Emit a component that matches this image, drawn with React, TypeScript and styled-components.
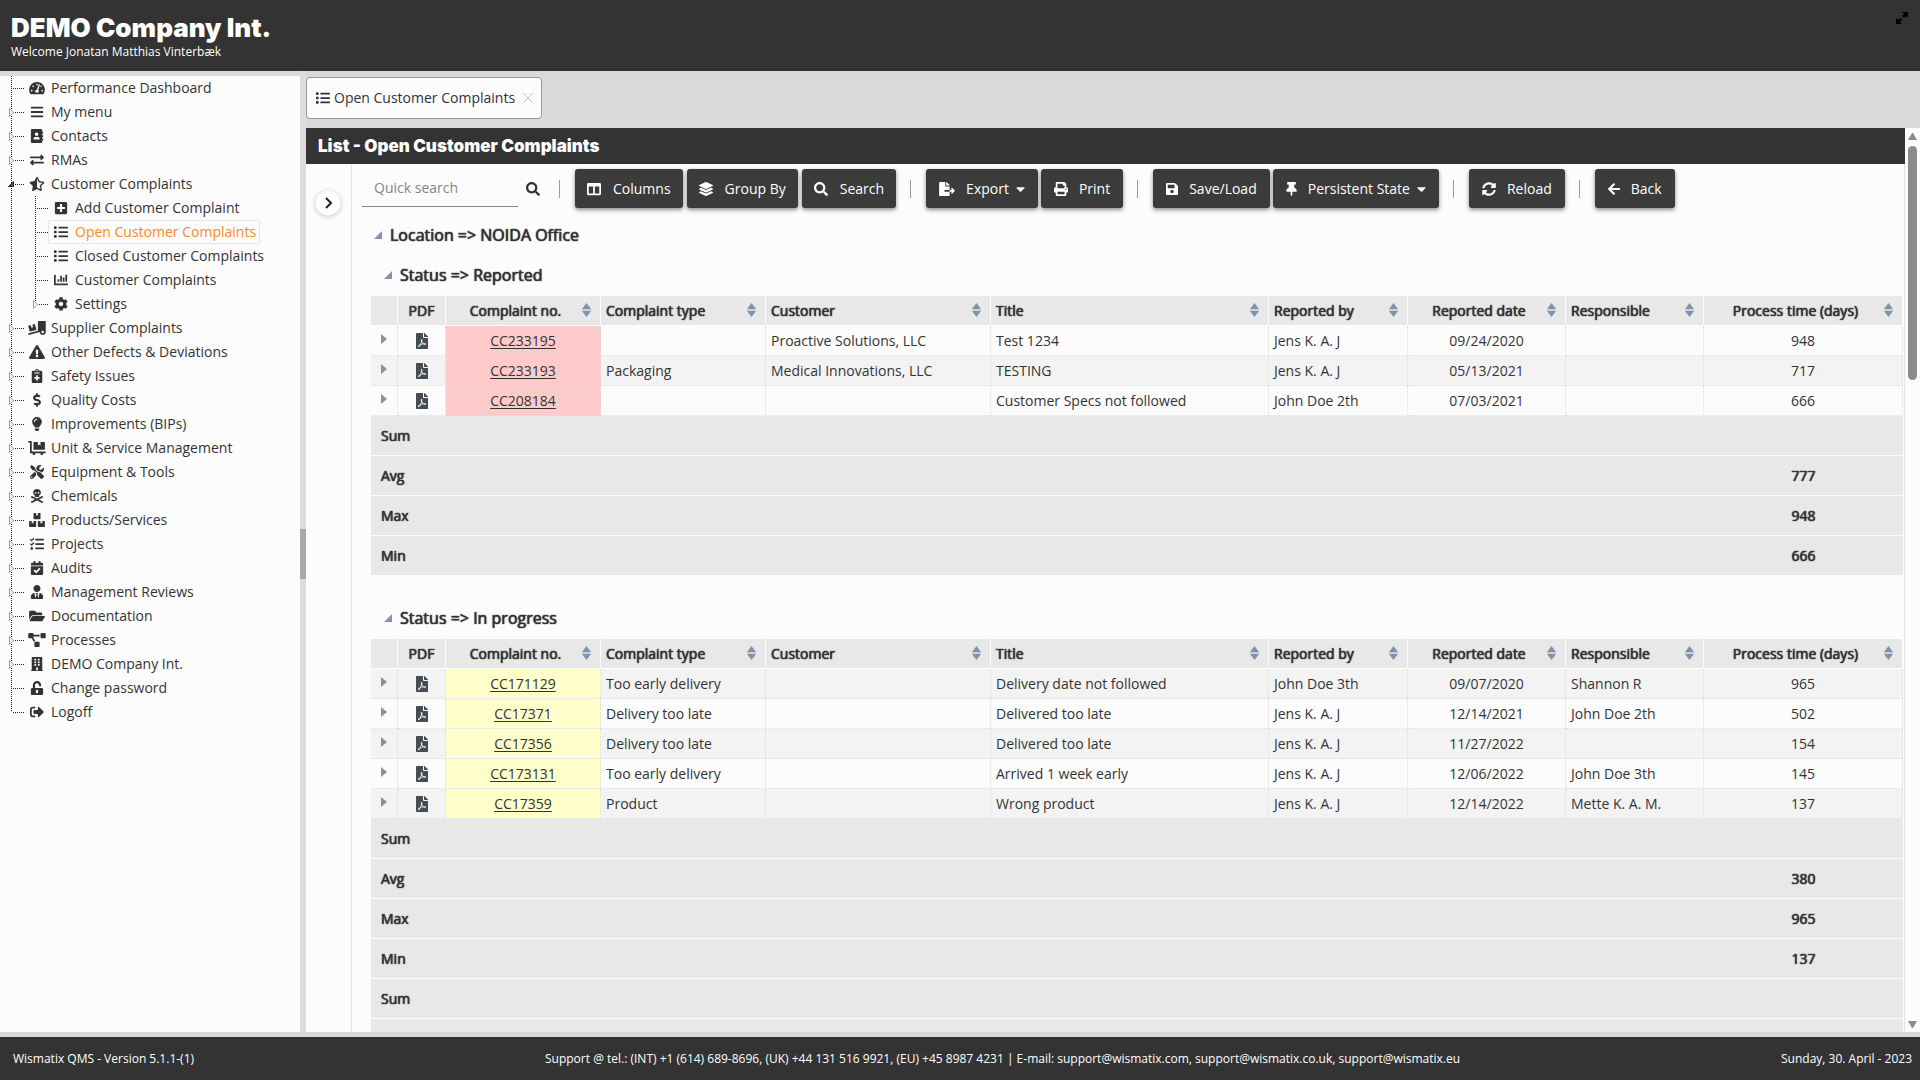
import React from "react";
import styled, { createGlobalStyle, css } from "styled-components";
import type { IconType } from "react-icons";
import {
  FaTachometerAlt, FaBars, FaAddressBook, FaExchangeAlt, FaStarHalfAlt, FaPlusSquare, FaList,
  FaChartBar, FaCog, FaTruckLoading, FaExclamationTriangle, FaNotesMedical, FaDollarSign,
  FaLightbulb, FaDollyFlatbed, FaTools, FaSkullCrossbones, FaBoxes, FaTasks, FaCalendarCheck,
  FaUserTie, FaFolderOpen, FaProjectDiagram, FaBuilding, FaUnlockAlt, FaSignOutAlt, FaColumns,
  FaLayerGroup, FaSearch, FaFileExport, FaPrint, FaSave, FaThumbtack, FaSyncAlt, FaArrowLeft,
  FaFilePdf, FaCaretDown,
} from "react-icons/fa";

const ink = "#333";
const paper = "#fcfcfc";
const sans = '"Open Sans", "Noto Sans", sans-serif';
const black = 'Inter, "Open Sans", sans-serif';

const GlobalStyle = createGlobalStyle`
  * { box-sizing: border-box; }
  body { margin: 0; background: #d9d9d9; color: ${ink}; font: 400 14px/20px ${sans}; overflow: hidden; }
  button, input { font: inherit; color: inherit; }
  button { border: 0; background: none; padding: 0; cursor: pointer; }
  a { color: inherit; text-decoration: none; }
  ul { list-style: none; margin: 0; padding: 0; }
  h1, h2, h3, p { margin: 0; }
`;

const emphasised = css`
  font-weight: 400;
  text-shadow: 0 0 1px currentColor, 0 0 1px currentColor;
`;

const Page = styled.div`
  display: flex;
  flex-direction: column;
  height: 100vh;
`;

const Header = styled.header`
  display: flex;
  justify-content: space-between;
  align-items: flex-start;
  flex: none;
  height: 71px;
  padding: 12px 12px 0 11px;
  background: ${ink};
  color: #fff;
`;

const Company = styled.h1`
  font: 900 26px/31px ${black};
`;

const Welcome = styled.p`
  font-size: 12px;
  line-height: 18px;
`;

const ExpandButton = styled.button`
  display: flex;
  width: 12px;
  height: 12px;
  color: #000;
`;

const Body = styled.div`
  display: flex;
  flex: 1;
  min-height: 0;
  padding-bottom: 5px;
`;

const Sidebar = styled.nav`
  flex: none;
  width: 300px;
  margin-top: 5px;
  background: ${paper};
`;

const Splitter = styled.div`
  display: flex;
  flex: none;
  align-items: center;
  width: 6px;
  padding-top: 5px;
  background: #ddd;
`;

const SplitterGrip = styled.div`
  width: 6px;
  height: 50px;
  background: #a9a9a9;
`;

const Row = styled.div`
  display: flex;
  align-items: center;
  height: 24px;
`;

const Toggle = styled.button`
  display: block;
  width: 24px;
  height: 24px;
`;

const Guide = styled.svg`
  display: block;
  flex: none;
  width: 24px;
  height: 24px;
`;

const TreeLink = styled.a<{ $active?: boolean }>`
  display: flex;
  align-items: center;
  height: 24px;
  padding-right: 3px;
  border: 1px solid ${(p) => (p.$active ? "#e6e6e6" : "transparent")};
  border-radius: 2px;
  & > span:last-child { color: ${(p) => (p.$active ? "#fd8a1c" : ink)}; }
`;

const IconSlot = styled.span`
  display: flex;
  margin-right: 2px;
  svg { width: 24px; height: 14px; }
`;

const Main = styled.main`
  display: flex;
  flex: 1;
  flex-direction: column;
  min-width: 0;
`;

const TabStrip = styled.div`
  display: flex;
  flex: none;
  height: 57px;
  padding-top: 6px;
`;

const Tab = styled.div`
  display: flex;
  align-items: center;
  gap: 4px;
  height: 42px;
  padding: 0 8px 0 9px;
  border: 1px solid #999;
  border-radius: 4px;
  background: ${paper};
`;

const CloseTab = styled.button`
  display: flex;
  margin-left: 4px;
  color: #c4c4c4;
`;

const Workspace = styled.div`
  display: flex;
  flex: 1;
  min-height: 0;
  background: ${paper};
`;

const Scrolled = styled.div`
  flex: 1;
  display: flex;
  flex-direction: column;
  min-width: 0;
  overflow: hidden;
`;

const TitleBar = styled.h2`
  flex: none;
  padding: 0 12px;
  background: ${ink};
  color: #fff;
  font: 900 17px/36px ${black};
`;

const Panels = styled.div`
  display: flex;
  flex: 1;
  min-height: 0;
  border-right: 1px solid #e4e4e4;
`;

const Drawer = styled.div`
  flex: none;
  width: 45px;
  padding: 26px 0 0 9px;
  background: ${paper};
`;

const DrawerButton = styled.button`
  display: flex;
  align-items: center;
  justify-content: center;
  width: 26px;
  height: 26px;
  border: 1px solid #eee;
  border-radius: 50%;
  background: #fff;
  box-shadow: 0 1px 4px rgba(60, 60, 90, 0.25);
`;

const Report = styled.div`
  flex: 1;
  min-width: 0;
  border-left: 1px solid #e4e4e4;
  padding: 5px 1px 0 10px;
  overflow: hidden;
`;

const Toolbar = styled.div`
  display: flex;
  align-items: center;
  height: 39px;
  margin-bottom: 8px;
`;

const Search = styled.form`
  display: flex;
  align-items: center;
`;

const SearchInput = styled.input`
  width: 156px;
  height: 37px;
  padding: 0 12px 1px;
  border: 0;
  border-bottom: 1px solid #888;
  background: transparent;
  outline: 0;
  &::placeholder { color: #858585; opacity: 1; }
`;

const SearchButton = styled.button`
  display: flex;
  margin: 0 5px 0 8px;
`;

const Separator = styled.span`
  width: 1px;
  height: 18px;
  margin: 0 15px 0 14px;
  background: #999;
`;

const Group = styled.div<{ $roomy: boolean }>`
  display: flex;
  gap: ${(p) => (p.$roomy ? 3 : 4)}px;
  button { padding: 0 ${(p) => (p.$roomy ? 13 : 12)}px; }
  button > span { margin-left: ${(p) => (p.$roomy ? 11 : 12)}px; }
`;

const ToolButton = styled.button<{ $icon: number }>`
  display: flex;
  align-items: center;
  height: 39px;
  border-radius: 3px;
  background: #3b3b3b;
  color: #fff;
  box-shadow: 0 2px 4px rgba(0, 0, 0, 0.45);
  & > svg { width: ${(p) => p.$icon}px; height: 14px; }
  & > span + svg { width: 9px; margin-left: 7px; }
`;

const GroupTitle = styled.h3<{ $level: number }>`
  display: flex;
  align-items: center;
  gap: 8px;
  height: 40px;
  padding: 0 0 2px ${(p) => (p.$level === 1 ? 12 : 22)}px;
  font-size: 16px;
  ${emphasised}
`;

const Table = styled.table`
  width: calc(100% - 9px);
  margin: 0 0 23px 9px;
  border-collapse: separate;
  border-spacing: 0;
  table-layout: fixed;
`;

const Col = styled.col<{ $w?: number }>`
  width: ${(p) => (p.$w ? `${p.$w}px` : "auto")};
`;

const HeadCell = styled.th<{ $center?: boolean; $plain?: boolean }>`
  height: 30px;
  padding: 0 ${(p) => (p.$plain ? 5 : 9)}px 0 5px;
  border-right: 1px solid ${paper};
  border-bottom: 1px solid ${paper};
  background: #e8e8e8;
  text-align: left;
  ${emphasised}
  & > div { display: flex; align-items: center; }
  & > div > span { flex: 1; text-align: ${(p) => (p.$center ? "center" : "left")}; }
`;

const SortButton = styled.button`
  display: flex;
  margin: 0 0 2px 2px;
`;

const Cell = styled.td<{ $center?: boolean; $tint?: string }>`
  height: 30px;
  padding: 0 5px;
  border-right: 1px dotted #ddd;
  border-bottom: 1px dotted #ddd;
  text-align: ${(p) => (p.$center ? "center" : "left")};
  ${(p) => p.$tint && css`background: ${p.$tint};`}
  white-space: nowrap;
  a { text-decoration: underline; text-underline-offset: 2px; }
`;

const DataRow = styled.tr<{ $odd: boolean }>`
  background: ${(p) => (p.$odd ? "#f3f3f3" : paper)};
`;

const RowToggle = styled.button`
  display: flex;
  margin: 0 auto 3px 5px;
`;

const PdfLink = styled.a`
  display: flex;
  justify-content: center;
  color: #444c54;
  svg { width: 16px; height: 16px; }
`;

const SumCell = styled.td<{ $center?: boolean }>`
  height: 40px;
  padding: 0 10px;
  background: #e8e8e8;
  border-bottom: 1px solid ${paper};
  text-align: ${(p) => (p.$center ? "center" : "left")};
  ${emphasised}
`;

const ScrollTrack = styled.div`
  display: flex;
  flex: none;
  flex-direction: column;
  align-items: center;
  width: 15px;
  padding: 5px 0 4px;
`;

const ScrollThumb = styled.div`
  width: 9px;
  height: 234px;
  margin: 6px 0 auto;
  border-radius: 5px;
  background: #8b8b8b;
`;

const Footer = styled.footer`
  display: flex;
  flex: none;
  align-items: center;
  justify-content: space-between;
  height: 43px;
  padding: 0 8px 0 13px;
  background: ${ink};
  color: #fff;
  font-size: 12px;
`;

const Support = styled.span`
  padding-left: 30px;
`;

type Node = { label: string; icon: IconType; kids?: boolean; children?: Node[]; active?: boolean };

const tree: Node[] = [
  { label: "Performance Dashboard", icon: FaTachometerAlt },
  { label: "My menu", icon: FaBars, kids: true },
  { label: "Contacts", icon: FaAddressBook, kids: true },
  { label: "RMAs", icon: FaExchangeAlt, kids: true },
  {
    label: "Customer Complaints", icon: FaStarHalfAlt, kids: true,
    children: [
      { label: "Add Customer Complaint", icon: FaPlusSquare },
      { label: "Open Customer Complaints", icon: FaList, active: true },
      { label: "Closed Customer Complaints", icon: FaList },
      { label: "Customer Complaints", icon: FaChartBar },
      { label: "Settings", icon: FaCog, kids: true },
    ],
  },
  { label: "Supplier Complaints", icon: FaTruckLoading, kids: true },
  { label: "Other Defects & Deviations", icon: FaExclamationTriangle, kids: true },
  { label: "Safety Issues", icon: FaNotesMedical, kids: true },
  { label: "Quality Costs", icon: FaDollarSign, kids: true },
  { label: "Improvements (BIPs)", icon: FaLightbulb, kids: true },
  { label: "Unit & Service Management", icon: FaDollyFlatbed, kids: true },
  { label: "Equipment & Tools", icon: FaTools, kids: true },
  { label: "Chemicals", icon: FaSkullCrossbones, kids: true },
  { label: "Products/Services", icon: FaBoxes, kids: true },
  { label: "Projects", icon: FaTasks, kids: true },
  { label: "Audits", icon: FaCalendarCheck, kids: true },
  { label: "Management Reviews", icon: FaUserTie, kids: true },
  { label: "Documentation", icon: FaFolderOpen, kids: true },
  { label: "Processes", icon: FaProjectDiagram, kids: true },
  { label: "DEMO Company Int.", icon: FaBuilding, kids: true },
  { label: "Change password", icon: FaUnlockAlt },
  { label: "Logoff", icon: FaSignOutAlt },
];

function Lines({ last, branch, toggle }: { last?: boolean; branch?: boolean; toggle?: "open" | "closed" }) {
  return (
    <Guide viewBox="0 0 24 24" aria-hidden="true">
      <path d={last ? "M11.5 0V12" : "M11.5 0V24"} stroke="#222" strokeDasharray="1 1" />
      {branch && <path d="M13 12.5H24" stroke="#222" strokeDasharray="1 1" />}
      {toggle === "closed" && <path d="M9.5 8.5V16.5L13.5 12.5Z" fill={paper} stroke="#a0a0a0" />}
      {toggle === "open" && <path d="M8.5 14.5H13.5V9.5Z" fill="#555" stroke="#222" />}
    </Guide>
  );
}

function TreeItem({ node, last, nested }: { node: Node; last: boolean; nested?: boolean }) {
  const Icon = node.icon;
  const state = node.children ? "open" : "closed";
  return (
    <li>
      <Row>
        {nested && <Lines />}
        {node.kids ? (
          <Toggle type="button" aria-label={`Toggle ${node.label}`}>
            <Lines branch last={last} toggle={state} />
          </Toggle>
        ) : (
          <Lines branch last={last} />
        )}
        <TreeLink href="#" $active={node.active}>
          <IconSlot><Icon /></IconSlot>
          <span>{node.label}</span>
        </TreeLink>
      </Row>
      {node.children && (
        <ul>
          {node.children.map((c, i) => (
            <TreeItem key={c.label} node={c} nested last={i === node.children!.length - 1} />
          ))}
        </ul>
      )}
    </li>
  );
}

const tools: { label: string; icon: IconType; w: number; menu?: boolean }[][] = [
  [
    { label: "Columns", icon: FaColumns, w: 14 },
    { label: "Group By", icon: FaLayerGroup, w: 14 },
    { label: "Search", icon: FaSearch, w: 14 },
  ],
  [{ label: "Export", icon: FaFileExport, w: 16, menu: true }, { label: "Print", icon: FaPrint, w: 14 }],
  [{ label: "Save/Load", icon: FaSave, w: 12 }, { label: "Persistent State", icon: FaThumbtack, w: 11, menu: true }],
  [{ label: "Reload", icon: FaSyncAlt, w: 14 }],
  [{ label: "Back", icon: FaArrowLeft, w: 12 }],
];

type Column = { label: string; w?: number; center?: boolean; plain?: boolean };

const columns: Column[] = [
  { label: "", w: 27, plain: true },
  { label: "PDF", w: 48, center: true, plain: true },
  { label: "Complaint no.", w: 155, center: true },
  { label: "Complaint type", w: 165 },
  { label: "Customer", w: 225 },
  { label: "Title" },
  { label: "Reported by", w: 139 },
  { label: "Reported date", w: 158, center: true },
  { label: "Responsible", w: 138 },
  { label: "Process time (days)", w: 199, center: true },
];

type Section = { status: string; tint: string; rows: string[][]; sums: [string, string][] };

const sections: Section[] = [
  {
    status: "Reported",
    tint: "#ffcaca",
    rows: [
      ["CC233195", "", "Proactive Solutions, LLC", "Test 1234", "Jens K. A. J", "09/24/2020", "", "948"],
      ["CC233193", "Packaging", "Medical Innovations, LLC", "TESTING", "Jens K. A. J", "05/13/2021", "", "717"],
      ["CC208184", "", "", "Customer Specs not followed", "John Doe 2th", "07/03/2021", "", "666"],
    ],
    sums: [["Sum", ""], ["Avg", "777"], ["Max", "948"], ["Min", "666"]],
  },
  {
    status: "In progress",
    tint: "#ffffca",
    rows: [
      ["CC171129", "Too early delivery", "", "Delivery date not followed", "John Doe 3th", "09/07/2020", "Shannon R", "965"],
      ["CC17371", "Delivery too late", "", "Delivered too late", "Jens K. A. J", "12/14/2021", "John Doe 2th", "502"],
      ["CC17356", "Delivery too late", "", "Delivered too late", "Jens K. A. J", "11/27/2022", "", "154"],
      ["CC173131", "Too early delivery", "", "Arrived 1 week early", "Jens K. A. J", "12/06/2022", "John Doe 3th", "145"],
      ["CC17359", "Product", "", "Wrong product", "Jens K. A. J", "12/14/2022", "Mette K. A. M.", "137"],
    ],
    sums: [["Sum", ""], ["Avg", "380"], ["Max", "965"], ["Min", "137"], ["Sum", ""], ["", ""]],
  },
];

const SortIcon = () => (
  <svg width="9" height="14" viewBox="0 0 9 14" aria-hidden="true">
    <path d="M0 6L4.5 0L9 6ZM0 8H9L4.5 14Z" fill="#8292aa" />
    <path d="M0 6H9V8H0Z" fill="#c9d0da" />
  </svg>
);

const OpenMark = () => (
  <svg width="8" height="8" viewBox="0 0 8 8" aria-hidden="true">
    <path d="M0 8H8V0Z" fill="#8292aa" />
  </svg>
);

function StatusTable({ section }: { section: Section }) {
  return (
    <Table>
      <colgroup>{columns.map((c) => <Col key={c.label} $w={c.w} />)}</colgroup>
      <thead>
        <tr>
          {columns.map((c) => (
            <HeadCell key={c.label} scope="col" $center={c.center} $plain={c.plain}>
              <div>
                <span>{c.label}</span>
                {!c.plain && <SortButton type="button" aria-label={`Sort by ${c.label}`}><SortIcon /></SortButton>}
              </div>
            </HeadCell>
          ))}
        </tr>
      </thead>
      <tbody>
        {section.rows.map((r, i) => (
          <DataRow key={r[0]} $odd={section.status === "Reported" ? i % 2 === 1 : i % 2 === 0}>
            <Cell>
              <RowToggle type="button" aria-label={`Expand ${r[0]}`}>
                <svg width="6" height="10" viewBox="0 0 6 10"><path d="M0 0L6 5L0 10Z" fill="#8292aa" /></svg>
              </RowToggle>
            </Cell>
            <Cell><PdfLink href="#" aria-label={`PDF of ${r[0]}`}><FaFilePdf /></PdfLink></Cell>
            {r.map((v, j) => (
              <Cell key={j} $center={columns[j + 2].center} $tint={j === 0 ? section.tint : undefined}>
                {j === 0 ? <a href="#">{v}</a> : v}
              </Cell>
            ))}
          </DataRow>
        ))}
      </tbody>
      <tfoot>
        {section.sums.map(([label, value], i) => (
          <tr key={i}>
            <SumCell colSpan={9}>{label}</SumCell>
            <SumCell $center>{value}</SumCell>
          </tr>
        ))}
      </tfoot>
    </Table>
  );
}

export default function App() {
  return (
    <Page>
      <GlobalStyle />
      <Header>
        <div>
          <Company>DEMO Company Int.</Company>
          <Welcome>Welcome Jonatan Matthias Vinterbæk</Welcome>
        </div>
        <ExpandButton type="button" aria-label="Full screen">
          <svg width="12" height="12" viewBox="0 0 12 12" fill="currentColor">
            <path d="M6 0H12V6L10 4L8 6L6 4L8 2ZM0 6L2 8L4 6L6 8L4 10L6 12H0Z" />
          </svg>
        </ExpandButton>
      </Header>
      <Body>
        <Sidebar aria-label="Main menu">
          <ul>
            {tree.map((n, i) => <TreeItem key={n.label} node={n} last={i === tree.length - 1} />)}
          </ul>
        </Sidebar>
        <Splitter><SplitterGrip /></Splitter>
        <Main>
          <TabStrip>
            <Tab>
              <FaList />
              <span>Open Customer Complaints</span>
              <CloseTab type="button" aria-label="Close tab">
                <svg width="10" height="10" viewBox="0 0 10 10"><path d="M0 0L10 10M10 0L0 10" stroke="currentColor" /></svg>
              </CloseTab>
            </Tab>
          </TabStrip>
          <Workspace>
            <Scrolled>
              <TitleBar>List - Open Customer Complaints</TitleBar>
              <Panels>
                <Drawer>
                  <DrawerButton type="button" aria-label="Open panel">
                    <svg width="8" height="12" viewBox="0 0 8 12"><path d="M2 1L7 6L2 11" fill="none" stroke="#222" strokeWidth="2" /></svg>
                  </DrawerButton>
                </Drawer>
                <Report>
                  <Toolbar>
                    <Search>
                      <SearchInput type="search" aria-label="Quick search" placeholder="Quick search" />
                      <SearchButton type="button" aria-label="Run search"><FaSearch /></SearchButton>
                    </Search>
                    {tools.map((group, i) => (
                      <React.Fragment key={i}>
                        <Separator />
                        <Group $roomy={i > 0}>
                          {group.map(({ label, icon: Icon, w, menu }) => (
                            <ToolButton key={label} type="button" $icon={w}>
                              <Icon />
                              <span>{label}</span>
                              {menu && <FaCaretDown />}
                            </ToolButton>
                          ))}
                        </Group>
                      </React.Fragment>
                    ))}
                  </Toolbar>
                  <GroupTitle $level={1}><OpenMark />Location =&gt; NOIDA Office</GroupTitle>
                  {sections.map((s) => (
                    <section key={s.status}>
                      <GroupTitle $level={2}><OpenMark />Status =&gt; {s.status}</GroupTitle>
                      <StatusTable section={s} />
                    </section>
                  ))}
                </Report>
              </Panels>
            </Scrolled>
            <ScrollTrack>
              <svg width="9" height="7" viewBox="0 0 9 7"><path d="M0 7L4 0H5L9 7Z" fill="#8b8b8b" /></svg>
              <ScrollThumb />
              <svg width="9" height="7" viewBox="0 0 9 7"><path d="M0 0L4 7H5L9 0Z" fill="#8b8b8b" /></svg>
            </ScrollTrack>
          </Workspace>
        </Main>
      </Body>
      <Footer>
        <span>Wismatix QMS - Version 5.1.1-(1)</span>
        <Support>Support @ tel.: (INT) +1 (614) 689-8696, (UK) +44 131 516 9921, (EU) +45 8987 4231 | E-mail: support@wismatix.com, support@wismatix.co.uk, support@wismatix.eu</Support>
        <span>Sunday, 30. April - 2023</span>
      </Footer>
    </Page>
  );
}
